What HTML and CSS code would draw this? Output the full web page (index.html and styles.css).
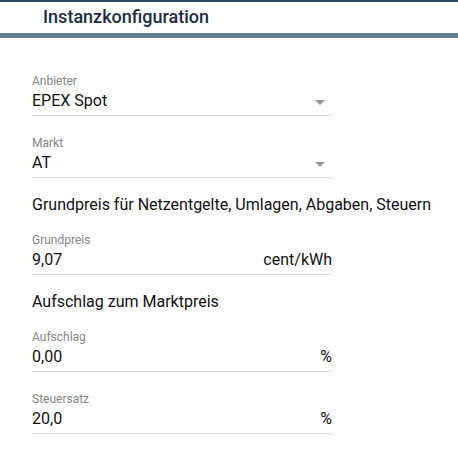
FILE: index.html
```html
<!DOCTYPE html>
<html lang="de">
<head>
<meta charset="utf-8">
<link rel="stylesheet" href="styles.css">
</head>
<body>
<div class="header">
  <div class="title">Instanzkonfiguration</div>
</div>
<div class="form">
  <div class="field">
    <div class="label">Anbieter</div>
    <div class="control">
      <span class="value">EPEX Spot</span>
      <span class="arrow"></span>
    </div>
  </div>
  <div class="field">
    <div class="label">Markt</div>
    <div class="control">
      <span class="value">AT</span>
      <span class="arrow"></span>
    </div>
  </div>
  <div class="heading">Grundpreis für Netzentgelte, Umlagen, Abgaben, Steuern</div>
  <div class="field">
    <div class="label">Grundpreis</div>
    <div class="control">
      <span class="value">9,07</span>
      <span class="unit">cent/kWh</span>
    </div>
  </div>
  <div class="heading">Aufschlag zum Marktpreis</div>
  <div class="field">
    <div class="label">Aufschlag</div>
    <div class="control">
      <span class="value">0,00</span>
      <span class="unit">%</span>
    </div>
  </div>
  <div class="field">
    <div class="label">Steuersatz</div>
    <div class="control">
      <span class="value">20,0</span>
      <span class="unit">%</span>
    </div>
  </div>
</div>
</body>
</html>
```
FILE: styles.css
```css
html, body {
  margin: 0;
  padding: 0;
  background: #ffffff;
  font-family: Roboto, "Liberation Sans", sans-serif;
}
.header {
  border-top: 2px solid #2e4a6a;
  border-bottom: 5px solid #6b7f94;
  height: 31px;
}
.title {
  padding-left: 43px;
  font-size: 18px;
  font-weight: 500;
  line-height: 30px;
  color: #1c2c48;
}
.form {
  display: flex;
  flex-direction: column;
  width: 300px;
  padding: 35px 0 0 32px;
}
.field {
  margin-bottom: 17px;
}
.field + .field {
  margin-top: 2px;
}
.label {
  font-size: 12px;
  line-height: 16px;
  color: #858585;
}
.control {
  display: flex;
  align-items: center;
  justify-content: space-between;
  border-bottom: 1px solid #dddddd;
  padding: 2px 0 4px;
  height: 20px;
}
.value,
.unit {
  font-size: 16px;
  line-height: 20px;
  color: #111111;
}
.arrow {
  width: 0;
  height: 0;
  border-left: 5px solid transparent;
  border-right: 5px solid transparent;
  border-top: 5px solid #999999;
  margin: 2px 7px 0 0;
}
.heading {
  font-size: 16px;
  line-height: 20px;
  color: #111111;
  margin-bottom: 17px;
  white-space: nowrap;
}
```
